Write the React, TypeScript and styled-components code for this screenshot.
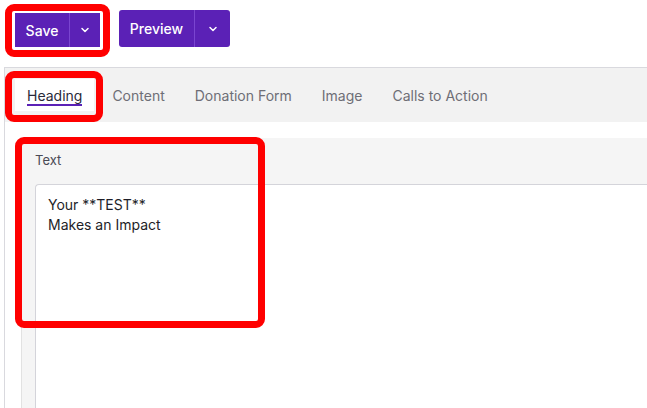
import React from "react";
import styled, { createGlobalStyle } from "styled-components";

const Global = createGlobalStyle`
  html, body { margin: 0; padding: 0; background: #fff; overflow: hidden; }
  body { font-family: Inter, "Noto Sans", sans-serif; width: 647px; height: 408px; }
`;

const Page = styled.div`
  position: relative;
  width: 647px;
  height: 408px;
  overflow: hidden;
`;

const Toolbar = styled.div`
  display: flex;
  gap: 19px;
  padding: 10px 0 0 15px;
  height: 57px;
  box-sizing: border-box;
  align-items: flex-start;
`;

const Group = styled.div<{ $top: number }>`
  display: flex;
  height: 37px;
  margin-top: ${(p) => p.$top}px;
  background: #5b21b6;
  border-radius: 3px;
  color: #fff;
  font-size: 14px;
  font-weight: 500;
`;

const Main = styled.button<{ $w: number }>`
  width: ${(p) => p.$w}px;
  background: none;
  border: 0;
  color: inherit;
  font: inherit;
  padding: 0;
`;

const Caret = styled.button`
  width: 36px;
  border: 0;
  border-left: 1px solid #7a45d0;
  background: none;
  color: #fff;
  display: flex;
  align-items: center;
  justify-content: center;
  padding: 0;
`;

const Panel = styled.div`
  margin-top: 10px;
  margin-left: 4px;
  border-top: 1px solid #d9d9de;
  border-left: 1px solid #d9d9de;
  height: 400px;
`;

const Tabs = styled.div`
  display: flex;
  align-items: center;
  background: #f2f2f2;
  height: 54px;
  padding-left: 10px;
  gap: 0;
`;

const Tab = styled.div<{ $active?: boolean }>`
  height: 32px;
  display: flex;
  align-items: center;
  padding: 0 12px;
  margin-right: 6px;
  font-size: 14px;
  color: ${(p) => (p.$active ? "#2a2a3a" : "#6e6e76")};
  background: ${(p) => (p.$active ? "#fff" : "transparent")};
  span {
    border-bottom: ${(p) => (p.$active ? "2px solid #5b21b6" : "2px solid transparent")};
    padding-top: 2px;
  }
`;

const Body = styled.div`
  padding: 16px 0 0 16px;
`;

const Section = styled.div`
  background: #f5f5f5;
  border-left: 1px solid #e2e2e2;
  padding: 14px 0 0 13px;
  height: 300px;
`;

const Label = styled.div`
  font-size: 13px;
  color: #4a4a55;
  margin-bottom: 16px;
`;

const TextBox = styled.div`
  background: #fff;
  border: 1px solid #d4d4da;
  border-right: 0;
  border-radius: 4px 0 0 0;
  height: 260px;
  padding: 10px 12px;
  font-size: 14px;
  line-height: 20px;
  color: #1e1e28;
`;

const Highlight = styled.div<{ $x: number; $y: number; $w: number; $h: number }>`
  position: absolute;
  left: ${(p) => p.$x}px;
  top: ${(p) => p.$y}px;
  width: ${(p) => p.$w}px;
  height: ${(p) => p.$h}px;
  border: 7px solid #ff0000;
  border-radius: 9px;
  box-sizing: border-box;
  pointer-events: none;
`;

const Chevron = () => (
  <svg width="12" height="12" viewBox="0 0 24 24" fill="none" stroke="#fff" strokeWidth="3" strokeLinecap="round" strokeLinejoin="round">
    <path d="M6 9l6 6 6-6" />
  </svg>
);

export default function App() {
  return (
    <Page>
      <Global />
      <Toolbar>
        <Group $top={3} style={{ height: 34, borderRadius: 0 }}>
          <Main $w={54}>Save</Main>
          <Caret style={{ width: 31 }}><Chevron /></Caret>
        </Group>
        <Group $top={0}>
          <Main $w={75}>Preview</Main>
          <Caret><Chevron /></Caret>
        </Group>
      </Toolbar>
      <Panel>
        <Tabs>
          <Tab $active><span>Heading</span></Tab>
          <Tab>Content</Tab>
          <Tab>Donation Form</Tab>
          <Tab>Image</Tab>
          <Tab>Calls to Action</Tab>
        </Tabs>
        <Body>
          <Section>
            <Label>Text</Label>
            <TextBox>
              Your **TEST**
              <br />
              Makes an Impact
            </TextBox>
          </Section>
        </Body>
      </Panel>
      <Highlight $x={5} $y={4} $w={105} $h={53} />
      <Highlight $x={5} $y={71} $w={98} $h={51} />
      <Highlight $x={15} $y={137} $w={250} $h={191} />
    </Page>
  );
}
